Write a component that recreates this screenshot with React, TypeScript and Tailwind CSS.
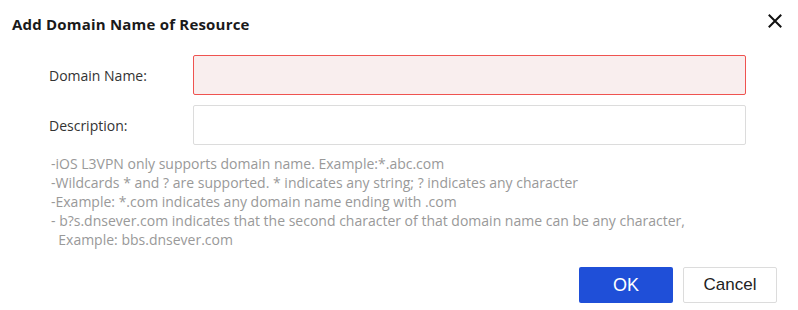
import React from "react";

export default function App() {
  const font = { fontFamily: '"Open Sans", "Noto Sans", sans-serif' };
  return (
    <div className="w-[798px] h-[310px] bg-white relative overflow-hidden" style={font}>
      <div className="flex items-center justify-between h-[44px] pl-[12px] pr-[16px] pt-[4px]">
        <div className="text-[15px] font-bold text-[#1a1a1a] tracking-[0.2px]">Add Domain Name of Resource</div>
        <svg width="14" height="14" viewBox="0 0 14 14" className="mt-[-6px]">
          <path d="M1.5 1.5 L12.5 12.5 M12.5 1.5 L1.5 12.5" stroke="#111" strokeWidth="2" strokeLinecap="square" />
        </svg>
      </div>
      <div className="pl-[49px] pt-[11px] flex flex-col gap-[10px]">
        <div className="flex items-center">
          <div className="w-[144px] text-[14px] text-[#333]">Domain Name:</div>
          <div className="w-[553px] h-[40px] rounded-[2px] border border-[#ef5350] bg-[#f9eeee]" />
        </div>
        <div className="flex items-center">
          <div className="w-[144px] text-[14px] text-[#333]">Description:</div>
          <div className="w-[553px] h-[40px] rounded-[2px] border border-[#dcdcdc] bg-white" />
        </div>
      </div>
      <div className="pl-[51px] pt-[9px] text-[14px] leading-[19px] text-[#999] whitespace-pre">
        <div>-iOS L3VPN only supports domain name. Example:*.abc.com</div>
        <div>-Wildcards * and ? are supported. * indicates any string; ? indicates any character</div>
        <div>-Example: *.com indicates any domain name ending with .com</div>
        <div>- b?s.dnsever.com indicates that the second character of that domain name can be any character,</div>
        <div>{"  Example: bbs.dnsever.com"}</div>
      </div>
      <div className="absolute left-0 right-0 top-[267px] flex justify-end gap-[10px] pr-[21px]" style={{ fontFamily: '"Liberation Sans", Arial, sans-serif' }}>
        <button className="w-[94px] h-[36px] rounded-[2px] bg-[#1f4fd8] text-white text-[18px]">OK</button>
        <button className="w-[94px] h-[36px] rounded-[2px] bg-white border border-[#dcdcdc] text-[#222] text-[17px]">Cancel</button>
      </div>
    </div>
  );
}
